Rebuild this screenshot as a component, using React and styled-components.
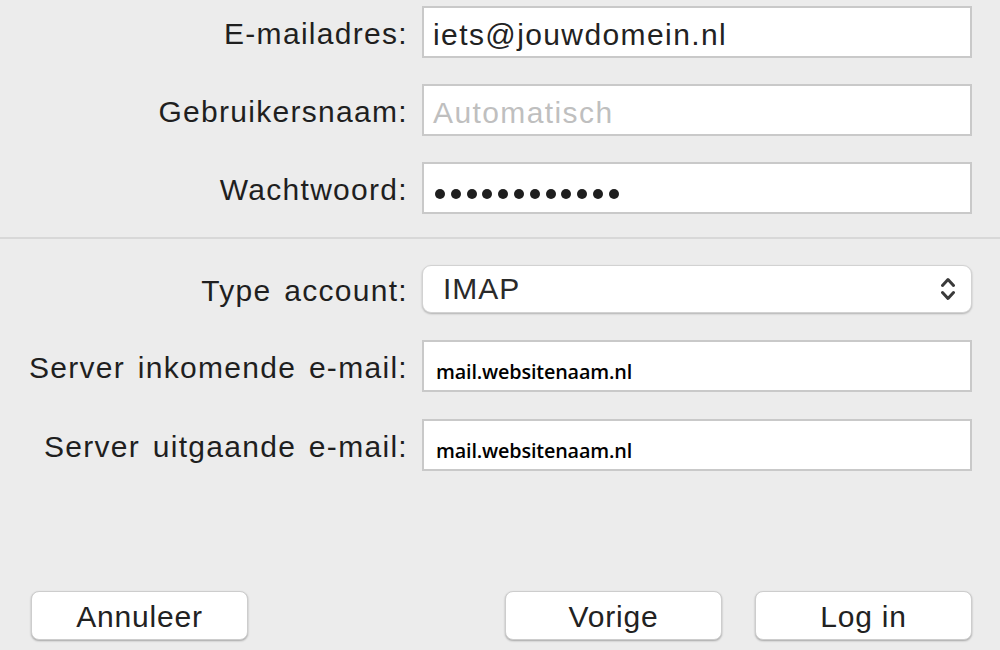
import React from "react";
import styled, { createGlobalStyle } from "styled-components";

const Global = createGlobalStyle`
  html, body { margin: 0; padding: 0; background: #ececec; }
  body { font-family: "Liberation Sans", Arial, sans-serif; color: #1d1d1d; }
`;

const Page = styled.div`
  width: 1000px;
  height: 650px;
  background: #ececec;
  display: flex;
  flex-direction: column;
  overflow: hidden;
`;

const Section = styled.div`
  display: grid;
  grid-template-columns: 408px 550px;
  column-gap: 14px;
  row-gap: ${(p) => p.$gap}px;
  padding-top: ${(p) => p.$top}px;
  align-items: center;
`;

const Label = styled.div`
  text-align: right;
  font-size: 30px;
  letter-spacing: 1.3px;
  word-spacing: 3px;
  color: #1f1f1f;
  white-space: nowrap;
  padding-top: 4px;
`;

const Field = styled.div`
  box-sizing: border-box;
  height: 52px;
  background: #fff;
  border: 2px solid #c9c9c9;
  display: flex;
  align-items: center;
  padding-left: ${(p) => (p.$small ? 12 : 9)}px;
  padding-top: 5px;
  font-size: 30px;
  letter-spacing: ${(p) => (p.$small ? 0 : 1.4)}px;
  color: ${(p) => (p.$placeholder ? "#bfbfbf" : "#222")};
  ${(p) =>
    p.$small &&
    `font-family: "Open Sans", "Noto Sans", sans-serif; font-weight: 600; font-size: 19.8px; color: #000; padding-top: 10px; letter-spacing: -0.15px;`}
`;

const Dots = styled.div`
  display: flex;
  gap: 5.8px;
  padding-left: 2px;
  padding-top: 6px;
`;

const Dot = styled.span`
  width: 10px;
  height: 10px;
  border-radius: 50%;
  background: #1e1e1e;
`;

const Divider = styled.div`
  height: 2px;
  background: #d8d8d8;
  margin-top: 23px;
`;

const Select = styled.div`
  box-sizing: border-box;
  height: 48px;
  background: #fff;
  border: 1px solid #d2d2d2;
  border-radius: 9px;
  box-shadow: 0 1px 2px rgba(0, 0, 0, 0.25);
  display: flex;
  align-items: center;
  justify-content: space-between;
  padding: 0 16px 0 20px;
  font-size: 30px;
  letter-spacing: 1px;
  color: #2a2a2a;
`;

const Footer = styled.div`
  display: flex;
  justify-content: space-between;
  padding: 0 28px 0 31px;
  margin-top: 120px;
`;

const Group = styled.div`
  display: flex;
  gap: 33px;
`;

const Button = styled.button`
  box-sizing: border-box;
  width: 217px;
  height: 49px;
  background: #fff;
  border: 1px solid #cdcdcd;
  border-radius: 8px;
  box-shadow: 0 1px 2px rgba(0, 0, 0, 0.3);
  font-family: "Liberation Sans", Arial, sans-serif;
  font-size: 30px;
  letter-spacing: 0.8px;
  color: #222;
  padding: 3px 0 0;
  display: flex;
  align-items: center;
  justify-content: center;
`;

const Chevrons = () => (
  <svg width="14" height="26" viewBox="0 0 14 26" fill="none">
    <path d="M1.5 9.5 L7 3.5 L12.5 9.5" stroke="#3a3a3a" strokeWidth="3" strokeLinecap="round" strokeLinejoin="round" />
    <path d="M1.5 16.5 L7 22.5 L12.5 16.5" stroke="#3a3a3a" strokeWidth="3" strokeLinecap="round" strokeLinejoin="round" />
  </svg>
);

export default function App() {
  return (
    <Page>
      <Global />
      <Section $top={6} $gap={26}>
        <Label>E-mailadres:</Label>
        <Field>iets@jouwdomein.nl</Field>
        <Label>Gebruikersnaam:</Label>
        <Field $placeholder>Automatisch</Field>
        <Label>Wachtwoord:</Label>
        <Field>
          <Dots>
            {Array.from({ length: 12 }).map((_, i) => (
              <Dot key={i} />
            ))}
          </Dots>
        </Field>
      </Section>
      <Divider />
      <Section $top={26} $gap={27}>
        <Label>Type account:</Label>
        <Select>
          <span>IMAP</span>
          <Chevrons />
        </Select>
        <Label>Server inkomende e-mail:</Label>
        <Field $small>mail.websitenaam.nl</Field>
        <Label>Server uitgaande e-mail:</Label>
        <Field $small>mail.websitenaam.nl</Field>
      </Section>
      <Footer>
        <Button>Annuleer</Button>
        <Group>
          <Button>Vorige</Button>
          <Button>Log in</Button>
        </Group>
      </Footer>
    </Page>
  );
}
